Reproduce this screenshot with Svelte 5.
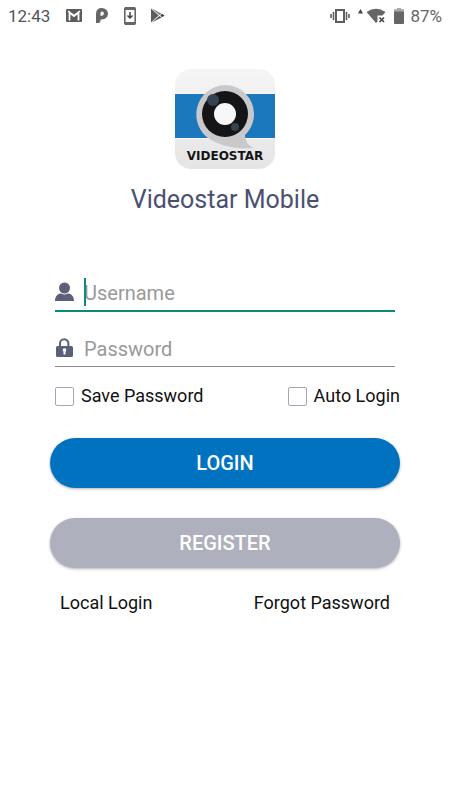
<script lang="ts">
    let username = $state("");
    let password = $state("");
    let savePassword = $state(false);
    let autoLogin = $state(false);

    function login(event: SubmitEvent) {
        event.preventDefault();
    }
</script>

<div class="status-bar">
    <div class="notifications">
        <span class="clock">12:43</span>
        <svg class="mail" width="16" height="13" viewBox="0 0 16 13">
            <rect width="16" height="13" rx="1" fill="#5c5c5c" />
            <path d="M3.500 11.500V3.500L8 7L12.500 3.500V11.500" fill="none" stroke="#fff" stroke-width="1.800" />
            <path d="M2 2L8 6.500L14 2" fill="none" stroke="#fff" stroke-width="1.200" />
        </svg>
        <svg class="pandora" width="12" height="15" viewBox="0 0 12 15">
            <path
                d="M6 0A6 5.700 0 0 1 6 11.400H4.500V12.500Q4.500 15 2 15H0V5.700Q0 0 6 0ZM6 3.500Q4.500 3.500 4.500 5V7.800H6Q7.900 7.500 7.900 5.600Q7.900 3.500 6 3.500Z"
                fill="#666"
                fill-rule="evenodd"
            />
        </svg>
        <svg class="download" width="12" height="18" viewBox="0 0 12 18">
            <rect x="0.800" y="0.800" width="10.400" height="16.400" rx="1" fill="#fff" stroke="#666" stroke-width="1.600" />
            <path d="M1 1.500H11M1 16.500H11" stroke="#666" stroke-width="3" />
            <path d="M6 5V11M3.500 8.500L6 11L8.500 8.500" fill="none" stroke="#444" stroke-width="1.500" />
        </svg>
        <svg class="play" width="15" height="15" viewBox="0 0 15 15">
            <path d="M1 0.500L8.700 7.500L1 14.500Z" fill="#5c5c5c" />
            <path d="M2 0.500L11.500 5.500L9.500 7.200Z" fill="#888" />
            <path d="M2 14.500L11.500 9.500L9.500 8Z" fill="#555" />
            <path d="M12 5.800L14.500 7.500L12 9.200L10.300 7.500Z" fill="#444" />
        </svg>
    </div>
    <div class="system">
        <svg class="vibrate" width="20" height="14" viewBox="0 0 20 14">
            <rect x="6" y="1" width="8" height="12" fill="none" stroke="#5f5f5f" stroke-width="2" />
            <path d="M3.500 3V11M16.500 3V11M1 5V9M19 5V9" stroke="#5f5f5f" stroke-width="1.600" />
        </svg>
        <svg class="wifi" width="28" height="18" viewBox="0 0 28 18">
            <path d="M2.500 2L5 6.500H0Z" fill="#444" />
            <path d="M8.500 5Q18 -1.500 27.500 5L24.500 8.500H19.500V14.500L18 16Z" fill="#666" />
            <path d="M21.500 10.500L26 15M26 10.500L21.500 15" stroke="#444" stroke-width="1.600" />
        </svg>
        <svg class="battery" width="10" height="16" viewBox="0 0 10 16">
            <path d="M1 1.500H3V0H7V1.500H9Q10 1.500 10 2.500V15Q10 16 9 16H1Q0 16 0 15V2.500Q0 1.500 1 1.500Z" fill="#666" />
            <path d="M0 3.500V2.500Q0 1.500 1 1.500H3V0H7V1.500H9Q10 1.500 10 2.500V3.500Z" fill="#aaa" />
        </svg>
        <span class="level">87%</span>
    </div>
</div>

<main>
    <svg class="logo" width="100" height="100" viewBox="0 0 100 100" role="img" aria-label="Videostar">
        <defs>
            <linearGradient id="shell" x1="0" y1="0" x2="0" y2="1">
                <stop offset="0" stop-color="#f5f5f5" />
                <stop offset="1" stop-color="#e5e5e5" />
            </linearGradient>
        </defs>
        <rect width="100" height="100" rx="16" fill="url(#shell)" />
        <rect y="24" width="100" height="46" fill="#f4f8fa" />
        <rect y="25" width="100" height="44" fill="#1b78bd" />
        <path
            d="M50 16A29 29 0 0 1 79 45C79 53 76 60 70 66C70 72 73 76 78 79C62 80 49 78 36 71A29.500 29.500 0 0 1 50 16Z"
            fill="#c9c9cb"
        />
        <circle cx="50" cy="45" r="23" fill="#151518" />
        <circle cx="38" cy="31" r="6" fill="#354251" />
        <circle cx="60" cy="58" r="4" fill="#354251" />
        <circle cx="50" cy="45" r="11" fill="#f7f7f7" />
        <text x="50" y="91" text-anchor="middle" class="wordmark">VIDEOSTAR</text>
    </svg>
    <h1>Videostar Mobile</h1>

    <form onsubmit={login}>
        <div class="field active">
            <svg width="20" height="20" viewBox="0 0 20 20">
                <circle cx="9.500" cy="6" r="5.500" fill="#5b6078" />
                <path d="M0 19C0 14 3 11.500 6 11.500Q9.500 13.500 13 11.500C16 11.500 19 14 19 19Z" fill="#5b6078" />
            </svg>
            <div class="entry">
                <input type="text" placeholder="Username" aria-label="Username" bind:value={username} />
                {#if !username}
                    <span class="caret"></span>
                {/if}
            </div>
        </div>
        <div class="field">
            <svg width="20" height="20" viewBox="0 0 20 20">
                <path d="M5 9V5.500A4.200 4.200 0 0 1 13.400 5.500V9" fill="none" stroke="#5b6078" stroke-width="2" />
                <rect x="1" y="8" width="17" height="11" rx="1.500" fill="#5b6078" />
                <circle cx="9.500" cy="12" r="1.800" fill="#fff" />
                <path d="M9.500 12V16.500" stroke="#fff" stroke-width="2" />
            </svg>
            <div class="entry">
                <input type="password" placeholder="Password" aria-label="Password" bind:value={password} />
            </div>
        </div>

        <div class="options">
            <label><input type="checkbox" bind:checked={savePassword} />Save Password</label>
            <label><input type="checkbox" bind:checked={autoLogin} />Auto Login</label>
        </div>

        <button type="submit" class="login-btn">LOGIN</button>
        <button type="button" class="register-btn">REGISTER</button>
    </form>

    <nav>
        <a href="#local">Local Login</a>
        <a href="#forgot">Forgot Password</a>
    </nav>
</main>

<style>
    :global(body) {
        background: #fff;
        font-family: Roboto, sans-serif;
    }

    .status-bar {
        display: flex;
        justify-content: space-between;
        height: 31px;
        padding: 0 8px;
        color: #666;
        font-size: 17px;
    }

    .notifications,
    .system {
        display: flex;
        align-items: center;
    }

    .clock {
        color: #555;
    }

    .mail {
        margin-left: 16px;
    }

    .pandora {
        margin-left: 14px;
    }

    .download {
        margin-left: 16px;
    }

    .play {
        margin-left: 14px;
    }

    .wifi {
        margin-left: 8px;
    }

    .battery {
        margin-left: 8px;
    }

    .level {
        margin-left: 6px;
    }

    main {
        display: flex;
        flex-direction: column;
        align-items: center;
        padding: 38px 50px;
    }

    .wordmark {
        font: bold 12px "DejaVu Sans", sans-serif;
        fill: #151518;
    }

    h1 {
        margin: 16px 0 59px;
        color: #4b5070;
        font-size: 25px;
        font-weight: 400;
        line-height: 30px;
    }

    form {
        display: flex;
        flex-direction: column;
        align-self: stretch;
    }

    .field {
        display: flex;
        align-items: center;
        box-sizing: border-box;
        height: 38px;
        margin: 0 5px 17px;
        border-bottom: 1px solid #8c8c8c;
    }

    .field.active {
        border-bottom: 2px solid #0b8a77;
    }

    .entry {
        position: relative;
        flex: 1;
        margin-left: 9px;
    }

    .entry input {
        display: block;
        box-sizing: border-box;
        width: 100%;
        height: 28px;
        padding: 2px 0 0;
        border: none;
        outline: none;
        background: none;
        color: #222;
        font: 20px Roboto, sans-serif;
    }

    .entry input::placeholder {
        color: #999;
        opacity: 1;
    }

    .caret {
        position: absolute;
        top: 0;
        left: 0;
        width: 2px;
        height: 28px;
        background: #0b8a77;
    }

    .options {
        display: flex;
        justify-content: space-between;
        margin: 0 0 30px 5px;
    }

    label {
        display: flex;
        align-items: center;
        gap: 7px;
        color: #111;
        font-size: 18px;
        line-height: 24px;
    }

    input[type="checkbox"] {
        appearance: none;
        box-sizing: border-box;
        width: 19px;
        height: 19px;
        margin: 0;
        border: 1px solid #a5a7b8;
        border-radius: 2px;
        background: #fff;
    }

    input[type="checkbox"]:checked {
        background: #0072bf;
    }

    button {
        height: 50px;
        margin-bottom: 30px;
        border: none;
        border-radius: 25px;
        color: #fff;
        font: 500 20px Roboto, sans-serif;
        box-shadow: 0 1px 3px rgba(0, 0, 0, 0.3);
    }

    .login-btn {
        background: #0072bf;
    }

    .register-btn {
        margin-bottom: 23px;
        background: #aeb0bd;
    }

    nav {
        display: flex;
        align-self: stretch;
        justify-content: space-between;
        padding: 0 10px;
    }

    a {
        color: #111;
        font-size: 18px;
        line-height: 24px;
        text-decoration: none;
    }
</style>
